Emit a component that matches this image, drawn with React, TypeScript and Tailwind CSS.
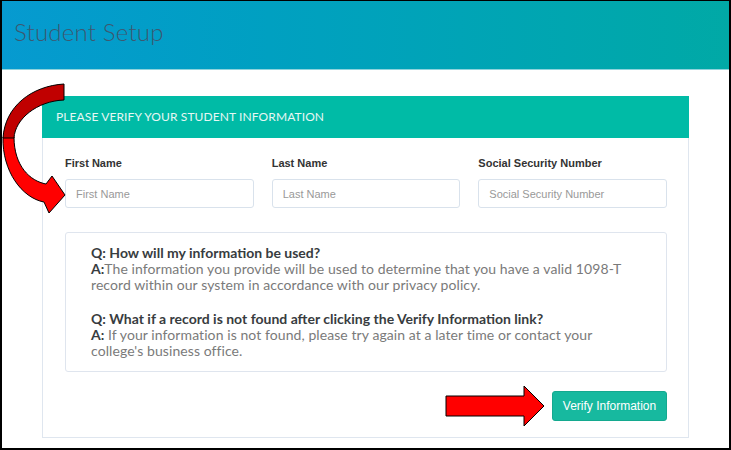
import React from "react";

const raleway = { fontFamily: "Lato, 'Open Sans', sans-serif" };

export default function App() {
  return (
    <div className="relative w-[731px] h-[450px] overflow-hidden bg-white border-t border-l-2 border-r-2 border-b-2 border-black box-border">
      <div
        className="h-[69px] border-b border-[#8fd3dc] bg-gradient-to-r from-[#069ad0] to-[#01a9a6] flex items-center pl-[12px]"
      >
        <h1 className="text-[24px] font-light text-[#3d5870] leading-none -mt-[6px] tracking-[0.2px]" style={raleway}>
          Student Setup
        </h1>
      </div>

      <div className="ml-[40px] mr-[40px] mt-[26px] border border-[#dfe6ef] w-[647px]">
        <div className="h-[42px] bg-[#00bba6] -mx-px -mt-px flex items-center pl-[14px]">
          <span className="text-[12px] text-[#e6f7f4] tracking-[0.1px]" style={raleway}>
            PLEASE VERIFY YOUR STUDENT INFORMATION
          </span>
        </div>
        <div className="pt-[19px] pl-[22px] pr-[21px] pb-[16px]" style={{ fontFamily: "'Liberation Sans', Arial, sans-serif" }}>
          <div className="grid grid-cols-3 gap-x-[18px]">
            {["First Name", "Last Name", "Social Security Number"].map((l) => (
              <div key={l} className="flex flex-col">
                <label className="text-[11px] font-bold text-[#333] leading-[13px] mb-[9px]">{l}</label>
                <input
                  placeholder={l}
                  className="h-[29px] border border-[#d9e2ec] rounded-[3px] px-[10px] text-[11px] text-[#555] placeholder:text-[#999] outline-none"
                />
              </div>
            ))}
          </div>

          <div className="mt-[24px] border border-[#dfe5ee] rounded-[3px] pl-[25px] pr-[35px] pt-[12px] pb-[12px] text-[14px] leading-[16px]" style={raleway}>
            <p className="font-bold text-[#383c40]">Q: How will my information be used?</p>
            <p className="text-[#7a7a7a] mb-[18px] tracking-[0.08px]">
              <span className="font-bold text-[#383c40] tracking-normal">A:</span>The information you provide will be used to determine that you have a valid 1098-T record within our system in accordance with our privacy policy.
            </p>
            <p className="font-bold text-[#383c40]">Q: What if a record is not found after clicking the Verify Information link?</p>
            <p className="text-[#7a7a7a] tracking-[0.08px]">
              <span className="font-bold text-[#383c40] tracking-normal">A:</span> If your information is not found, please try again at a later time or contact your college's business office.
            </p>
          </div>

          <div className="flex justify-end mt-[19px]">
            <button className="h-[30px] w-[115px] rounded-[3px] bg-[#17b99f] text-white text-[12px] border border-[#14a98f]">
              Verify Information
            </button>
          </div>
        </div>
      </div>

      <svg className="absolute left-0 top-0 pointer-events-none" width="731" height="450" viewBox="0 0 731 450">
        <path
          d="M1,136 C0,170 20,197 42,201 L47,212 L63,194 L50,175 L44,183 C28,180 12,165 12,136 Z"
          fill="#ff0000"
          stroke="#000"
          strokeWidth="1"
        />
        <path
          d="M62,83 C30,85 3,105 1,137 L12,137 C13,118 35,100 62,99 Z"
          fill="#c00000"
          stroke="#000"
          strokeWidth="1"
        />
        <path
          d="M444,395 L522,395 L522,385 L542,405 L522,425 L522,415 L444,415 Z"
          fill="#ff0000"
          stroke="#000"
          strokeWidth="1"
        />
      </svg>
    </div>
  );
}
